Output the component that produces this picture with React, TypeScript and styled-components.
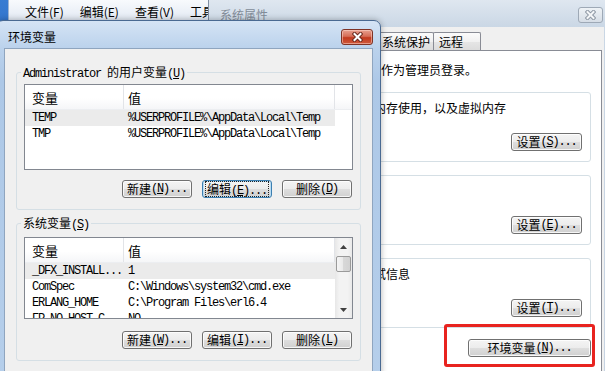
import React from 'react';
import styled, { createGlobalStyle } from 'styled-components';

const CJK = `"Noto Sans CJK SC", "Noto Sans", sans-serif`;
const MONO = `"Liberation Mono", "Noto Sans CJK SC", monospace`;

const GlobalStyle = createGlobalStyle`
  * { box-sizing: border-box; }
  html, body { margin: 0; padding: 0; }
  body {
    background: #4a77ad;
    color: #000;
    font-family: ${CJK};
    font-size: 12px;
  }
`;

type Variable = [string, string];

const userVars: Variable[] = [
  ['TEMP', '%USERPROFILE%\\AppData\\Local\\Temp'],
  ['TMP', '%USERPROFILE%\\AppData\\Local\\Temp'],
];

const systemVars: Variable[] = [
  ['_DFX_INSTALL...', '1'],
  ['ComSpec', 'C:\\Windows\\system32\\cmd.exe'],
  ['ERLANG_HOME', 'C:\\Program Files\\erl6.4'],
  ['FP_NO_HOST_C', 'NO'],
];

const Caption = ({ text, accel, more }: { text: string; accel: string; more?: boolean }) => (
  <>
    {text}
    <Latin>
      (<u>{accel}</u>){more ? '...' : ''}
    </Latin>
  </>
);

const CloseGlyph = ({ fill, outline }: { fill: string; outline: string }) => (
  <svg width="11" height="10" viewBox="0 0 11 10">
    <path d="M2.5 2 L8.5 8 M8.5 2 L2.5 8" stroke={outline} strokeWidth="4" strokeLinecap="square" fill="none" />
    <path d="M2.5 2 L8.5 8 M8.5 2 L2.5 8" stroke={fill} strokeWidth="2" strokeLinecap="square" fill="none" />
  </svg>
);

const Arrow = ({ up }: { up?: boolean }) => (
  <svg width="7" height="4" viewBox="0 0 7 4">
    <path d={up ? 'M0 4 L3.5 0 L7 4 Z' : 'M0 0 L7 0 L3.5 4 Z'} fill="#404040" />
  </svg>
);

const VariableList = ({
  rows,
  height,
  top,
  scroll,
}: {
  rows: Variable[];
  height: number;
  top: number;
  scroll?: boolean;
}) => (
  <ListFrame $height={height} $top={top}>
    <ListBody>
      <HeaderRow>
        <HeaderCell $w={99} $pad={7}>变量</HeaderCell>
        <HeaderCell $w={211} $pad={4}>值</HeaderCell>
        <HeaderFill />
      </HeaderRow>
      {rows.map(([name, value], i) => (
        <ListRow key={name} $selected={i === 0}>
          <Cell $w={99} $pad={7}>{name}</Cell>
          <Cell $w={211} $pad={4}>{value}</Cell>
        </ListRow>
      ))}
    </ListBody>
    {scroll && (
      <ScrollBar>
        <ScrollArrow>
          <Arrow up />
        </ScrollArrow>
        <ScrollThumb />
        <ScrollTrack />
        <ScrollArrow>
          <Arrow />
        </ScrollArrow>
      </ScrollBar>
    )}
  </ListFrame>
);

const App = () => {
  return (
    <Desktop>
      <GlobalStyle />

      <ExplorerWindow>
        <MenuBar>
          <MenuItem>文件(F)</MenuItem>
          <MenuItem>编辑(E)</MenuItem>
          <MenuItem>查看(V)</MenuItem>
          <MenuItem>工具</MenuItem>
        </MenuBar>
      </ExplorerWindow>

      {/* only the part of this window that shows beside the dialog carries text */}
      <SysWindow>
        <SysTitleBar>
          <SysTitle>系统属性</SysTitle>
          <SysClose>
            <CloseGlyph fill="#f4f6f8" outline="#8e98a4" />
          </SysClose>
        </SysTitleBar>
        <SysClient>
          <TabStrip>
            <Tab $w={58}>系统保护</Tab>
            <Tab $w={48}>远程</Tab>
          </TabStrip>
          <TabPanel>
            <IntroText>作为管理员登录。</IntroText>
            <SysGroup>
              <GroupText>内存使用，以及虚拟内存</GroupText>
              <ButtonRow $top={18}>
                <Button $w={71}>
                  <Caption text="设置" accel="S" more />
                </Button>
              </ButtonRow>
            </SysGroup>
            <SysGroup>
              <GroupText />
              <ButtonRow $top={18}>
                <Button $w={71}>
                  <Caption text="设置" accel="E" more />
                </Button>
              </ButtonRow>
            </SysGroup>
            <SysGroup>
              <GroupText>试信息</GroupText>
              <ButtonRow $top={18}>
                <Button $w={71}>
                  <Caption text="设置" accel="T" more />
                </Button>
              </ButtonRow>
            </SysGroup>
            <ButtonRow $top={11}>
              <Button $w={123}>
                <Caption text="环境变量" accel="N" more />
              </Button>
            </ButtonRow>
          </TabPanel>
        </SysClient>
      </SysWindow>

      <Highlight />

      <EnvDialog>
        <EnvTitleBar>
          <EnvTitle>环境变量</EnvTitle>
          <EnvClose>
            <CloseGlyph fill="#ffffff" outline="#6b2a1f" />
          </EnvClose>
        </EnvTitleBar>
        <EnvClient>
          <EnvGroup>
            <EnvLegend>
              <Latin>Administrator </Latin>的用户变量
              <Latin>
                (<u>U</u>)
              </Latin>
            </EnvLegend>
            <VariableList rows={userVars} height={86} top={5} />
            <ButtonRow $top={10} $gap={10} $right={1}>
              <Button $w={70}>
                <Caption text="新建" accel="N" more />
              </Button>
              <Button $w={70} $focused>
                <FocusRing>
                  <Caption text="编辑" accel="E" more />
                </FocusRing>
              </Button>
              <Button $w={70}>
                <Caption text="删除" accel="D" />
              </Button>
            </ButtonRow>
          </EnvGroup>
          <EnvGroup>
            <EnvLegend>
              系统变量
              <Latin>
                (<u>S</u>)
              </Latin>
            </EnvLegend>
            <VariableList rows={systemVars} height={82} top={7} scroll />
            <ButtonRow $top={12} $gap={10} $right={1}>
              <Button $w={70}>
                <Caption text="新建" accel="W" more />
              </Button>
              <Button $w={70}>
                <Caption text="编辑" accel="I" more />
              </Button>
              <Button $w={70}>
                <Caption text="删除" accel="L" />
              </Button>
            </ButtonRow>
          </EnvGroup>
        </EnvClient>
      </EnvDialog>
    </Desktop>
  );
};

export default App;

const Desktop = styled.div`
  position: relative;
  width: 605px;
  height: 371px;
  overflow: hidden;
`;

const Latin = styled.span`
  font-family: ${MONO};
  font-size: 12px;
  line-height: 10px;
  letter-spacing: -1.2px;
`;

/* explorer window behind everything, top left */
const ExplorerWindow = styled.div`
  position: absolute;
  left: -60px;
  top: -30px;
  width: 330px;
  height: 120px;
  padding: 30px 0 0 68px;
  background: linear-gradient(180deg, #3d83d8, #2865c0);
`;

const MenuBar = styled.div`
  display: flex;
  height: 21px;
  padding: 3px 0 0 8px;
  border-left: 1px solid #9db4d3;
  background: linear-gradient(180deg, #f8fafd, #e2e9f3);
`;

const MenuItem = styled.div`
  padding: 0 8px;
  font-size: 12px;
  line-height: 18px;
  white-space: nowrap;
`;

/* system properties window, inactive */
const SysWindow = styled.div`
  position: absolute;
  left: 208px;
  top: 0;
  width: 401px;
  height: 400px;
  isolation: isolate;
  display: flex;
  flex-direction: column;
  border-left: 1px solid #7f8ea3;
  border-right: 1px solid #7f8ea3;
  background: linear-gradient(180deg, #dfe7f0, #cad7e5 27px, #c6d3e2);
`;

const SysTitleBar = styled.div`
  height: 27px;
  display: flex;
  align-items: center;
  justify-content: space-between;
  padding: 3px 5px 0 11px;
`;

const SysTitle = styled.div`
  color: #828c98;
  font-size: 12px;
  line-height: 14px;
`;

const SysClose = styled.div`
  width: 25px;
  height: 16px;
  display: flex;
  align-items: center;
  justify-content: center;
  border: 1px solid #9ea9b6;
  border-radius: 3px;
  background: linear-gradient(180deg, #eef2f6, #d6dde6);
`;

const SysClient = styled.div`
  flex: 1;
  display: flex;
  flex-direction: column;
  margin: 0 4px;
  background: #f0f0f0;
`;

const TabStrip = styled.div`
  height: 23px;
  display: flex;
  align-items: flex-end;
  padding-left: 163px;
`;

const Tab = styled.div<{ $w: number }>`
  width: ${({ $w }) => $w}px;
  height: 18px;
  margin-right: -1px;
  padding-left: 5px;
  display: flex;
  align-items: center;
  border: 1px solid #898c95;
  border-bottom: none;
  border-radius: 2px 2px 0 0;
  background: linear-gradient(180deg, #fbfbfb 0%, #f1f1f1 50%, #e6e6e6 50%, #dcdcdc 100%);
  font-size: 12px;
  white-space: nowrap;
`;

const TabPanel = styled.div`
  flex: 1;
  display: flex;
  flex-direction: column;
  margin: 0 2px 0 7px;
  padding: 12px 10px 0 10px;
  border: 1px solid #898c95;
  background: #ffffff;
`;

const IntroText = styled.div`
  margin-left: 150px;
  font-size: 12px;
  line-height: 14px;
  white-space: nowrap;
`;

const SysGroup = styled.div`
  margin-top: 15px;
  padding: 8px 8px 10px 10px;
  border: 1px solid #d5dfe5;
  border-radius: 3px;

  & + & {
    margin-top: 13px;
  }
`;

const GroupText = styled.div`
  height: 14px;
  margin-left: 132px;
  font-size: 12px;
  line-height: 14px;
  white-space: nowrap;
`;

const ButtonRow = styled.div<{ $top: number; $gap?: number; $right?: number }>`
  display: flex;
  justify-content: flex-end;
  gap: ${({ $gap }) => $gap ?? 0}px;
  margin-top: ${({ $top }) => $top}px;
  padding-right: ${({ $right }) => $right ?? 0}px;
`;

const Button = styled.div<{ $w: number; $focused?: boolean }>`
  width: ${({ $w }) => $w}px;
  height: 18px;
  display: flex;
  align-items: center;
  justify-content: center;
  border: 1px solid ${({ $focused }) => ($focused ? '#3c7fb1' : '#707070')};
  border-radius: 3px;
  background: linear-gradient(180deg, #f4f4f4 0%, #ececec 49%, #dedede 50%, #d0d0d0 100%);
  box-shadow: inset 0 0 0 1px ${({ $focused }) => ($focused ? '#b8dcf3' : 'rgba(255,255,255,0.8)')};
  font-size: 12px;
  line-height: 14px;
  white-space: nowrap;
`;

const FocusRing = styled.span`
  padding: 0 1px;
  outline: 1px dotted #222;
  outline-offset: 0;
`;

const Highlight = styled.div`
  position: absolute;
  left: 444px;
  top: 324px;
  width: 151px;
  height: 43px;
  border: 3px solid #e8231f;
  border-radius: 3px;
`;

/* environment variables dialog, active, on top */
const EnvDialog = styled.div`
  position: absolute;
  z-index: 2;
  left: -4px;
  top: 20px;
  width: 385px;
  height: 380px;
  display: flex;
  flex-direction: column;
  border: 1px solid #4a6a92;
  border-radius: 7px 7px 0 0;
  background: linear-gradient(180deg, #d5e4f5, #bbd2ec 27px, #adc8e7 60px, #b6cfeb);
  box-shadow: 0 0 6px rgba(0, 0, 0, 0.3);
`;

const EnvTitleBar = styled.div`
  height: 27px;
  display: flex;
  align-items: center;
  justify-content: space-between;
  padding: 5px 7px 0 11px;
`;

const EnvTitle = styled.div`
  font-size: 12px;
  line-height: 14px;
`;

const EnvClose = styled.div`
  width: 32px;
  height: 16px;
  display: flex;
  align-items: center;
  justify-content: center;
  border: 1px solid #7e3326;
  border-radius: 3px;
  background: linear-gradient(180deg, #e8a090 0%, #d66d57 45%, #c2391f 55%, #cf5a3c 100%);
  box-shadow: inset 0 0 0 1px rgba(255, 220, 210, 0.5);
`;

const EnvClient = styled.div`
  flex: 1;
  margin: 0 7px;
  padding: 16px 11px 0 11px;
  border: 1px solid #8fa5bf;
  border-bottom: none;
  background: #f0f0f0;
`;

const EnvGroup = styled.fieldset`
  margin: 0;
  padding: 0 7px 11px 7px;
  border: 1px solid #d5dfe5;
  border-radius: 3px;
  min-width: 0;

  & + & {
    margin-top: 6px;
  }
`;

const EnvLegend = styled.legend`
  padding: 0 2px;
  margin-left: -3px;
  font-size: 12px;
  line-height: 14px;
  white-space: nowrap;
`;

const ListFrame = styled.div<{ $height: number; $top: number }>`
  display: flex;
  height: ${({ $height }) => $height}px;
  margin-top: ${({ $top }) => $top}px;
  border: 1px solid #828790;
  background: #ffffff;
  overflow: hidden;
`;

const ListBody = styled.div`
  flex: 1;
  min-width: 0;
`;

const HeaderRow = styled.div`
  display: flex;
  height: 25px;
  border-bottom: 1px solid #eceef1;
  background: linear-gradient(180deg, #ffffff 0%, #ffffff 55%, #f5f6f8 100%);
`;

const HeaderCell = styled.div<{ $w: number; $pad: number }>`
  width: ${({ $w }) => $w}px;
  padding-left: ${({ $pad }) => $pad}px;
  display: flex;
  align-items: center;
  border-right: 1px solid #e2e4e8;
  font-size: 13px;
`;

const HeaderFill = styled.div`
  flex: 1;
`;

const ListRow = styled.div<{ $selected?: boolean }>`
  display: flex;
  width: 310px;
  height: 16px;
  background: ${({ $selected }) => ($selected ? '#ebebeb' : 'transparent')};
`;

const Cell = styled.div<{ $w: number; $pad: number }>`
  width: ${({ $w }) => $w}px;
  padding-left: ${({ $pad }) => $pad}px;
  font-family: ${MONO};
  font-size: 12px;
  line-height: 16px;
  letter-spacing: -1.2px;
  white-space: nowrap;
  overflow: hidden;
`;

const ScrollBar = styled.div`
  width: 17px;
  display: flex;
  flex-direction: column;
  background: linear-gradient(90deg, #e7e7e7, #f3f3f3 25%, #f3f3f3 75%, #e9e9e9);
`;

const ScrollArrow = styled.div`
  height: 17px;
  display: flex;
  align-items: center;
  justify-content: center;
`;

const ScrollThumb = styled.div`
  height: 16px;
  margin: 1px 1px 0;
  border: 1px solid #9a9a9a;
  border-radius: 2px;
  background: linear-gradient(90deg, #f5f5f5, #e8e8e8 50%, #d8d8d8 50%, #d2d2d2);
`;

const ScrollTrack = styled.div`
  flex: 1;
`;
